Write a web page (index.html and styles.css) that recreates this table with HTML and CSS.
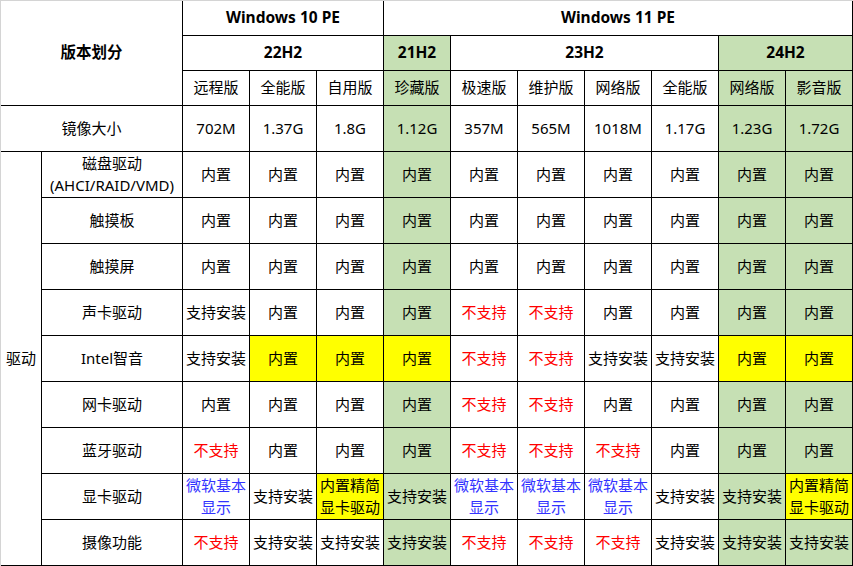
FILE: index.html
```html
<!DOCTYPE html>
<html lang="zh-CN">
<head>
<meta charset="utf-8">
<title>版本划分</title>
<link rel="stylesheet" href="styles.css">
</head>
<body>
<div class="sheet">
  <div class="grid">
    <div class="cell bold c2 r3">版本划分</div>
    <div class="cell bold c3">Windows 10 PE</div>
    <div class="cell bold c7">Windows 11 PE</div>

    <div class="cell bold c3">22H2</div>
    <div class="cell bold g">21H2</div>
    <div class="cell bold c4">23H2</div>
    <div class="cell bold c2 g">24H2</div>

    <div class="cell">远程版</div>
    <div class="cell">全能版</div>
    <div class="cell">自用版</div>
    <div class="cell g">珍藏版</div>
    <div class="cell">极速版</div>
    <div class="cell">维护版</div>
    <div class="cell">网络版</div>
    <div class="cell">全能版</div>
    <div class="cell g">网络版</div>
    <div class="cell g">影音版</div>

    <div class="cell c2">镜像大小</div>
    <div class="cell">702M</div>
    <div class="cell">1.37G</div>
    <div class="cell">1.8G</div>
    <div class="cell g">1.12G</div>
    <div class="cell">357M</div>
    <div class="cell">565M</div>
    <div class="cell">1018M</div>
    <div class="cell">1.17G</div>
    <div class="cell g">1.23G</div>
    <div class="cell g">1.72G</div>

    <div class="cell r9">驱动</div>
    <div class="cell two">磁盘驱动<br>(AHCI/RAID/VMD)</div>
    <div class="cell">内置</div>
    <div class="cell">内置</div>
    <div class="cell">内置</div>
    <div class="cell g">内置</div>
    <div class="cell">内置</div>
    <div class="cell">内置</div>
    <div class="cell">内置</div>
    <div class="cell">内置</div>
    <div class="cell g">内置</div>
    <div class="cell g">内置</div>

    <div class="cell">触摸板</div>
    <div class="cell">内置</div>
    <div class="cell">内置</div>
    <div class="cell">内置</div>
    <div class="cell g">内置</div>
    <div class="cell">内置</div>
    <div class="cell">内置</div>
    <div class="cell">内置</div>
    <div class="cell">内置</div>
    <div class="cell g">内置</div>
    <div class="cell g">内置</div>

    <div class="cell">触摸屏</div>
    <div class="cell">内置</div>
    <div class="cell">内置</div>
    <div class="cell">内置</div>
    <div class="cell g">内置</div>
    <div class="cell">内置</div>
    <div class="cell">内置</div>
    <div class="cell">内置</div>
    <div class="cell">内置</div>
    <div class="cell g">内置</div>
    <div class="cell g">内置</div>

    <div class="cell">声卡驱动</div>
    <div class="cell">支持安装</div>
    <div class="cell">内置</div>
    <div class="cell">内置</div>
    <div class="cell g">内置</div>
    <div class="cell red">不支持</div>
    <div class="cell red">不支持</div>
    <div class="cell">内置</div>
    <div class="cell">内置</div>
    <div class="cell g">内置</div>
    <div class="cell g">内置</div>

    <div class="cell">Intel智音</div>
    <div class="cell">支持安装</div>
    <div class="cell y">内置</div>
    <div class="cell y">内置</div>
    <div class="cell y">内置</div>
    <div class="cell red">不支持</div>
    <div class="cell red">不支持</div>
    <div class="cell">支持安装</div>
    <div class="cell">支持安装</div>
    <div class="cell y">内置</div>
    <div class="cell y">内置</div>

    <div class="cell">网卡驱动</div>
    <div class="cell">内置</div>
    <div class="cell">内置</div>
    <div class="cell">内置</div>
    <div class="cell g">内置</div>
    <div class="cell red">不支持</div>
    <div class="cell red">不支持</div>
    <div class="cell">内置</div>
    <div class="cell">内置</div>
    <div class="cell g">内置</div>
    <div class="cell g">内置</div>

    <div class="cell">蓝牙驱动</div>
    <div class="cell red">不支持</div>
    <div class="cell">内置</div>
    <div class="cell">内置</div>
    <div class="cell g">内置</div>
    <div class="cell red">不支持</div>
    <div class="cell red">不支持</div>
    <div class="cell red">不支持</div>
    <div class="cell">内置</div>
    <div class="cell g">内置</div>
    <div class="cell g">内置</div>

    <div class="cell">显卡驱动</div>
    <div class="cell blue two">微软基本<br>显示</div>
    <div class="cell">支持安装</div>
    <div class="cell y two">内置精简<br>显卡驱动</div>
    <div class="cell g">支持安装</div>
    <div class="cell blue two">微软基本<br>显示</div>
    <div class="cell blue two">微软基本<br>显示</div>
    <div class="cell blue two">微软基本<br>显示</div>
    <div class="cell">支持安装</div>
    <div class="cell g">支持安装</div>
    <div class="cell y two">内置精简<br>显卡驱动</div>

    <div class="cell">摄像功能</div>
    <div class="cell red">不支持</div>
    <div class="cell">支持安装</div>
    <div class="cell">支持安装</div>
    <div class="cell g">支持安装</div>
    <div class="cell red">不支持</div>
    <div class="cell red">不支持</div>
    <div class="cell red">不支持</div>
    <div class="cell">支持安装</div>
    <div class="cell g">支持安装</div>
    <div class="cell g">支持安装</div>
  </div>
</div>
</body>
</html>
```

FILE: styles.css
```css
html, body {
  margin: 0;
  padding: 0;
  background: #ffffff;
}

.sheet {
  border-top: 1px solid #d4d4d4;
  border-left: 1px solid #d4d4d4;
  width: 852px;
  height: 565px;
  box-sizing: content-box;
}

.grid {
  display: grid;
  grid-template-columns: 41px 141px repeat(10, 67px);
  grid-template-rows: 35px 35px 35px repeat(10, 46px);
  font-family: "Noto Sans", "Noto Sans CJK SC", sans-serif;
  font-size: 15px;
  color: #000;
}

.cell {
  box-sizing: border-box;
  border-right: 1px solid #000;
  border-bottom: 1px solid #000;
  padding-bottom: 2px;
  display: flex;
  align-items: center;
  justify-content: center;
  text-align: center;
  line-height: 20px;
  white-space: nowrap;
  overflow: hidden;
}

.two {
  line-height: 22px;
  padding-bottom: 1px;
}

.bold {
  font-weight: bold;
  font-size: 15.5px;
}

.c2 { grid-column: span 2; }
.c3 { grid-column: span 3; }
.c4 { grid-column: span 4; }
.c7 { grid-column: span 7; }
.r3 { grid-row: span 3; }
.r9 { grid-row: span 9; }

.g { background: #c6e0b4; }
.y { background: #ffff00; }
.red { color: #ff0000; }
.blue { color: #3333ff; }
```
